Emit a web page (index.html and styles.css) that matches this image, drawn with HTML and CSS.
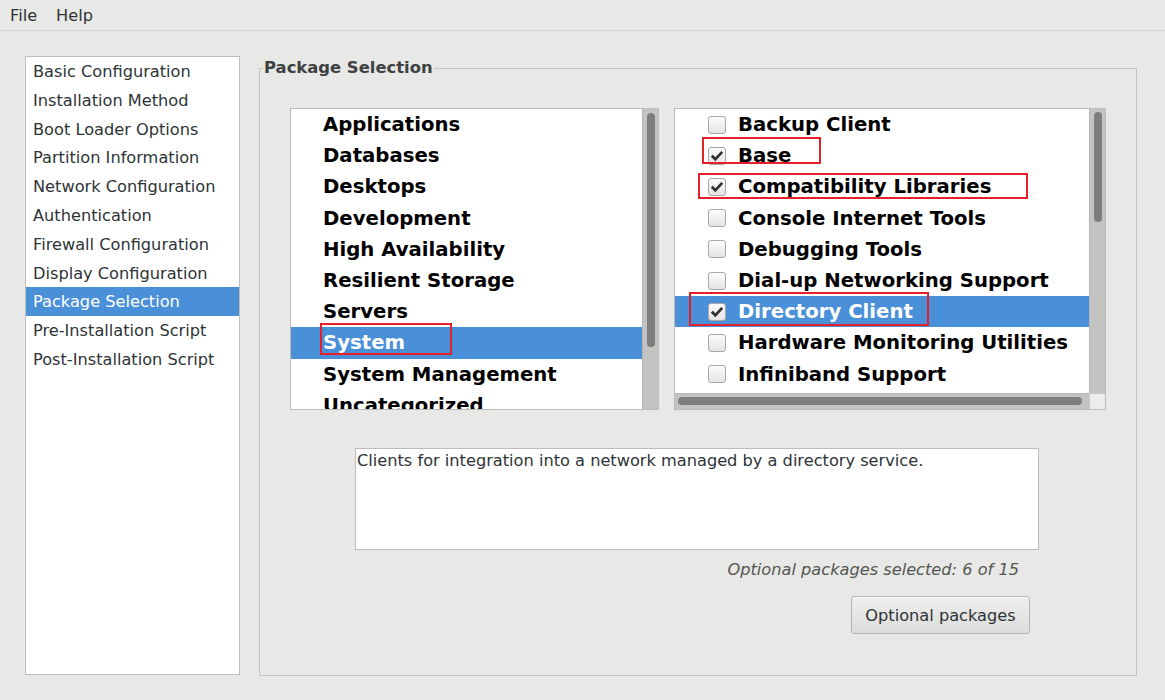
FILE: index.html
```html
<!DOCTYPE html>
<html>
<head>
<meta charset="utf-8">
<link rel="stylesheet" href="styles.css">
</head>
<body>
<div class="window">
  <div class="menubar">
    <span class="menu-item">File</span>
    <span class="menu-item">Help</span>
  </div>
  <div class="main">
    <ul class="sidebar">
      <li>Basic Configuration</li>
      <li>Installation Method</li>
      <li>Boot Loader Options</li>
      <li>Partition Information</li>
      <li>Network Configuration</li>
      <li>Authentication</li>
      <li>Firewall Configuration</li>
      <li>Display Configuration</li>
      <li class="selected">Package Selection</li>
      <li>Pre-Installation Script</li>
      <li>Post-Installation Script</li>
    </ul>
    <fieldset class="frame">
      <legend>Package Selection</legend>
      <div class="frame-body">
        <div class="lists">
          <div class="listbox groups">
            <div class="list-content">
              <ul class="rows">
                <li>Applications</li>
                <li>Databases</li>
                <li>Desktops</li>
                <li>Development</li>
                <li>High Availability</li>
                <li>Resilient Storage</li>
                <li>Servers</li>
                <li class="selected">System</li>
                <li>System Management</li>
                <li>Uncategorized</li>
              </ul>
              <div class="mark mark-system"></div>
            </div>
            <div class="vscroll"><div class="thumb thumb-groups"></div></div>
          </div>
          <div class="listbox packages">
            <div class="list-content">
              <ul class="rows checks">
                <li><span class="check"></span>Backup Client</li>
                <li><span class="check on"><svg viewBox="0 0 16 16"><path d="M2.8 7.8 L6.3 11.3 L13.2 3.8"/></svg></span>Base</li>
                <li><span class="check on"><svg viewBox="0 0 16 16"><path d="M2.8 7.8 L6.3 11.3 L13.2 3.8"/></svg></span>Compatibility Libraries</li>
                <li><span class="check"></span>Console Internet Tools</li>
                <li><span class="check"></span>Debugging Tools</li>
                <li><span class="check"></span>Dial-up Networking Support</li>
                <li class="selected"><span class="check on"><svg viewBox="0 0 16 16"><path d="M2.8 7.8 L6.3 11.3 L13.2 3.8"/></svg></span>Directory Client</li>
                <li><span class="check"></span>Hardware Monitoring Utilities</li>
                <li><span class="check"></span>Infiniband Support</li>
              </ul>
              <div class="mark mark-base"></div>
              <div class="mark mark-compat"></div>
              <div class="mark mark-directory"></div>
            </div>
            <div class="vscroll"><div class="thumb thumb-packages"></div></div>
            <div class="hscroll"><div class="hthumb"></div></div>
            <div class="corner"></div>
          </div>
        </div>
        <div class="details">
          <div class="description">Clients for integration into a network managed by a directory service.</div>
          <div class="count">Optional packages selected: 6 of 15</div>
          <button class="button">Optional packages</button>
        </div>
      </div>
    </fieldset>
  </div>
</div>
</body>
</html>
```

FILE: styles.css
```css
html, body {
  margin: 0;
  padding: 0;
}
body {
  background: #e8e8e7;
  font-family: "DejaVu Sans", "Liberation Sans", sans-serif;
  font-size: 16.2px;
  color: #2e3436;
}
.window {
  width: 1165px;
  height: 700px;
  overflow: hidden;
}
.menubar {
  box-sizing: border-box;
  height: 31px;
  border-bottom: 1px solid #d5d5d3;
  display: flex;
  align-items: center;
  gap: 19px;
  padding: 1px 10px 0;
  line-height: 18px;
}
.main {
  display: flex;
  align-items: flex-start;
  gap: 19px;
  padding: 25px 0 0 25px;
}
ul {
  list-style: none;
  margin: 0;
  padding: 0;
}
.sidebar {
  box-sizing: border-box;
  width: 215px;
  height: 619px;
  background: #fff;
  border: 1px solid #bdbdbb;
  flex: none;
}
.sidebar li {
  height: 28.8px;
  line-height: 30px;
  padding-left: 7px;
  white-space: nowrap;
}
.sidebar li.selected,
.rows li.selected {
  background: #4a90d9;
  color: #fff;
}
.frame {
  box-sizing: border-box;
  margin: 3px 0 0 0;
  padding: 0;
  width: 878px;
  height: 617px;
  border: 1px solid #c4c4c2;
  min-width: 0;
  flex: none;
}
.frame legend {
  font-weight: bold;
  font-size: 16.4px;
  color: #3e4142;
  padding: 0 1px;
  margin-left: 3px;
  line-height: 18px;
}
.frame-body {
  padding-top: 31px;
}
.lists {
  display: flex;
  gap: 15px;
  padding-left: 30px;
}
.listbox {
  box-sizing: border-box;
  height: 302px;
  border: 1px solid #bcbcba;
  background: #fff;
  display: grid;
}
.groups {
  width: 369px;
  grid-template-columns: 1fr 16px;
}
.packages {
  width: 432px;
  grid-template-columns: 1fr 16px;
  grid-template-rows: 1fr 16px;
}
.list-content {
  position: relative;
  overflow: hidden;
  min-height: 0;
}
.rows li {
  height: 31.2px;
  line-height: 31.2px;
  font-weight: bold;
  font-size: 19.7px;
  color: #000;
  white-space: nowrap;
  padding-left: 32px;
  display: flex;
  align-items: center;
}
.checks li {
  padding-left: 33px;
}
.check {
  box-sizing: border-box;
  width: 18px;
  height: 18px;
  margin-right: 12px;
  border: 1px solid #a8a8a6;
  border-radius: 3px;
  background: linear-gradient(#fbfbfb, #e4e4e3);
  flex: none;
  display: flex;
}
.check svg {
  width: 16px;
  height: 16px;
}
.check path {
  fill: none;
  stroke: #2e3134;
  stroke-width: 2.7;
  stroke-linecap: butt;
  stroke-linejoin: miter;
}
.vscroll {
  background: #c3c4c2;
  border-left: 1px solid #b5b6b4;
  box-sizing: border-box;
  position: relative;
  display: flex;
  justify-content: center;
  padding-left: 1px;
}
.thumb {
  width: 8px;
  border-radius: 4px;
  background: #7c7e7d;
}
.thumb-groups {
  margin-top: 4px;
  height: 234px;
}
.thumb-packages {
  margin-top: 3px;
  height: 110px;
}
.hscroll {
  background: #c3c4c2;
  border-top: 1px solid #b5b6b4;
  box-sizing: border-box;
  padding: 3px 0 0 3px;
}
.hthumb {
  width: 404px;
  height: 8px;
  border-radius: 4px;
  background: #7c7e7d;
}
.corner {
  background: #ececeb;
  border-left: 1px solid #c8c8c6;
  border-top: 1px solid #c8c8c6;
}
.mark {
  position: absolute;
  box-sizing: border-box;
  border: 2px solid #e5202b;
}
.mark-system {
  left: 29px;
  top: 214px;
  width: 132px;
  height: 32px;
}
.mark-base {
  left: 27px;
  top: 28px;
  width: 119px;
  height: 27px;
}
.mark-compat {
  left: 23px;
  top: 64px;
  width: 330px;
  height: 26px;
}
.mark-directory {
  left: 14px;
  top: 183px;
  width: 240px;
  height: 34px;
}
.details {
  width: 684px;
  margin: 38px 0 0 95px;
  display: flex;
  flex-direction: column;
  align-items: flex-end;
}
.description {
  box-sizing: border-box;
  align-self: stretch;
  height: 102px;
  background: #fff;
  border: 1px solid #bcbcba;
  padding: 2px 1px;
  line-height: 19px;
  color: #2e3436;
}
.count {
  font-style: italic;
  color: #555753;
  line-height: 18px;
  margin-top: 11px;
  margin-right: 20px;
}
.button {
  box-sizing: border-box;
  width: 179px;
  height: 38px;
  margin-top: 17px;
  margin-right: 9px;
  font-family: inherit;
  font-size: 16.2px;
  color: #2e3436;
  border: 1px solid #b4b4b2;
  border-radius: 3px;
  background: linear-gradient(#eeeeed, #dcdcdb);
  box-shadow: inset 0 1px 0 #fbfbfb;
  padding: 0;
}
```
